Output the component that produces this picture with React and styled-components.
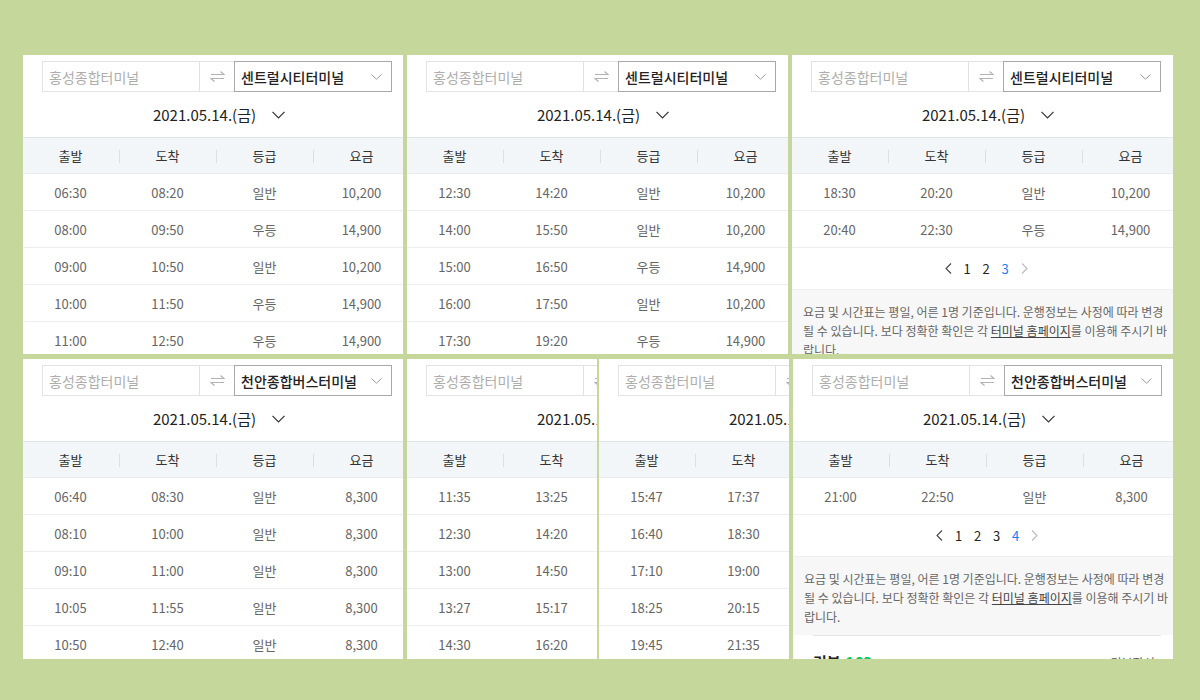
import React from 'react';
import styled, { createGlobalStyle } from 'styled-components';

const GlobalStyle = createGlobalStyle`
  html, body { margin: 0; padding: 0; }
  body {
    background: #c5d79a;
    font-family: "Noto Sans CJK KR", "Noto Sans", sans-serif;
  }
  * { box-sizing: border-box; }
`;

const Collage = styled.main`
  width: 1200px;
  height: 700px;
  overflow: hidden;
  display: flex;
  flex-direction: column;
  gap: 5px;
  padding: 55px 0 0 23px;
`;

const Row = styled.div`
  display: flex;
  gap: 4px;
`;

const Pair = styled.div`
  display: flex;
  gap: 2px;
`;

const Panel = styled.section`
  flex: none;
  width: ${(p) => p.$w}px;
  height: ${(p) => p.$h}px;
  background: #fff;
  overflow: hidden;
`;

const Page = styled.div`
  width: 388px;
  display: flex;
  flex-direction: column;
`;

const SearchBar = styled.div`
  display: flex;
  height: 31px;
  margin: 6px 19px 0;
`;

const FromField = styled.div`
  width: 157px;
  border: 1px solid #e3e3e3;
  border-right: none;
  display: flex;
  align-items: center;
  padding-left: 6px;
  font-size: 14px;
  color: #adadad;
  white-space: nowrap;
  overflow: hidden;
`;

const SwapBox = styled.div`
  width: 35px;
  border: 1px solid #e3e3e3;
  border-right: none;
  display: flex;
  align-items: center;
  justify-content: center;
`;

const ToSelect = styled.div`
  width: 158px;
  border: 1px solid #a9a9a9;
  display: flex;
  align-items: center;
  justify-content: space-between;
  padding: 0 9px 0 6px;
  font-size: 14px;
  font-weight: 500;
  color: #222;
  white-space: nowrap;
`;

const DateRow = styled.div`
  height: 45px;
  display: flex;
  align-items: center;
  justify-content: center;
  gap: 16px;
  padding-left: 4px;
  font-size: 15px;
  color: #222;
  white-space: nowrap;
`;

const Grid = styled.div`
  display: grid;
  grid-template-columns: repeat(4, 97px);
  margin-left: -1px;
  align-items: center;
`;

const HeadRow = styled(Grid)`
  height: 37px;
  background: #f3f6f9;
  border-top: 1px solid #e2e6ea;
  border-bottom: 1px solid #e9edf0;
`;

const HeadCell = styled.div`
  position: relative;
  text-align: center;
  font-size: 13px;
  color: #333;
  & + &::before {
    content: '';
    position: absolute;
    left: 0;
    top: 50%;
    width: 1px;
    height: 13px;
    margin-top: -6px;
    background: #dcdfe3;
  }
`;

const BodyRow = styled(Grid)`
  height: 37px;
  border-bottom: 1px solid #eeeeee;
`;

const Cell = styled.div`
  text-align: center;
  font-size: 13px;
  color: #666;
`;

const Pager = styled.div`
  height: 41px;
  display: flex;
  align-items: center;
  justify-content: center;
  font-size: 13px;
`;

const PageItem = styled.span`
  width: 19px;
  display: flex;
  justify-content: center;
  align-items: center;
  color: ${(p) => (p.$active ? '#1a7ef5' : '#222')};
`;

const Notice = styled.p`
  margin: 0;
  background: #f7f7f7;
  border-top: 1px solid #efefef;
  padding: 12px 10px 9px 11px;
  font-size: 12px;
  line-height: 19px;
  color: #666;
`;

const NoticeLink = styled.span`
  color: #444;
  text-decoration: underline;
`;

const Review = styled.div`
  margin: 0 20px;
  border-top: 1px solid #e6e6e6;
  padding-top: 15px;
  display: flex;
  justify-content: space-between;
  align-items: baseline;
`;

const ReviewTitle = styled.strong`
  font-size: 15px;
  color: #222;
`;

const ReviewCount = styled.span`
  margin-left: 5px;
  color: #03c75a;
`;

const ReviewLink = styled.span`
  font-size: 12px;
  color: #555;
`;

const SwapIcon = () => (
  <svg width="15" height="11" viewBox="0 0 15 11" fill="none" stroke="#b3b3b3" strokeWidth="1.2">
    <path d="M1 3.5H14L10.5 0.5" />
    <path d="M14 7.5H1L4.5 10.5" />
  </svg>
);

const SelectChevron = () => (
  <svg width="11" height="6" viewBox="0 0 11 6" fill="none" stroke="#9a9a9a" strokeWidth="1">
    <path d="M0.5 0.5L5.5 5.2L10.5 0.5" />
  </svg>
);

const DateChevron = () => (
  <svg width="13" height="8" viewBox="0 0 13 8" fill="none" stroke="#333" strokeWidth="1.2">
    <path d="M0.5 0.8L6.5 6.8L12.5 0.8" />
  </svg>
);

const ArrowLeft = () => (
  <svg width="7" height="11" viewBox="0 0 7 11" fill="none" stroke="#444" strokeWidth="1.1">
    <path d="M6 0.5L1 5.5L6 10.5" />
  </svg>
);

const ArrowRight = () => (
  <svg width="7" height="11" viewBox="0 0 7 11" fill="none" stroke="#bbb" strokeWidth="1.1">
    <path d="M1 0.5L6 5.5L1 10.5" />
  </svg>
);

const heads = ['출발', '도착', '등급', '요금'];

const Schedule = ({ to, rows, pages, active, notice, review }) => (
  <Page>
    <SearchBar>
      <FromField>홍성종합터미널</FromField>
      <SwapBox>
        <SwapIcon />
      </SwapBox>
      <ToSelect>
        {to}
        <SelectChevron />
      </ToSelect>
    </SearchBar>
    <DateRow>
      2021.05.14.(금)
      <DateChevron />
    </DateRow>
    <HeadRow>
      {heads.map((h) => (
        <HeadCell key={h}>{h}</HeadCell>
      ))}
    </HeadRow>
    {rows.map((r, i) => (
      <BodyRow key={i}>
        {r.map((c, j) => (
          <Cell key={j}>{c}</Cell>
        ))}
      </BodyRow>
    ))}
    {pages && (
      <Pager>
        <PageItem>
          <ArrowLeft />
        </PageItem>
        {Array.from({ length: pages }, (_, i) => (
          <PageItem key={i} $active={i + 1 === active}>
            {i + 1}
          </PageItem>
        ))}
        <PageItem>
          <ArrowRight />
        </PageItem>
      </Pager>
    )}
    {notice && (
      <Notice>
        요금 및 시간표는 평일, 어른 1명 기준입니다. 운행정보는 사정에 따라 변경될 수 있습니다. 보다 정확한 확인은 각{' '}
        <NoticeLink>터미널 홈페이지</NoticeLink>를 이용해 주시기 바랍니다.
      </Notice>
    )}
    {review && (
      <Review>
        <ReviewTitle>
          리뷰<ReviewCount>163</ReviewCount>
        </ReviewTitle>
        <ReviewLink>리뷰작성 ›</ReviewLink>
      </Review>
    )}
  </Page>
);

const SEOUL = '센트럴시티터미널';
const CHEONAN = '천안종합버스터미널';

const seoul1 = [
  ['06:30', '08:20', '일반', '10,200'],
  ['08:00', '09:50', '우등', '14,900'],
  ['09:00', '10:50', '일반', '10,200'],
  ['10:00', '11:50', '우등', '14,900'],
  ['11:00', '12:50', '우등', '14,900'],
];
const seoul2 = [
  ['12:30', '14:20', '일반', '10,200'],
  ['14:00', '15:50', '일반', '10,200'],
  ['15:00', '16:50', '우등', '14,900'],
  ['16:00', '17:50', '일반', '10,200'],
  ['17:30', '19:20', '우등', '14,900'],
];
const seoul3 = [
  ['18:30', '20:20', '일반', '10,200'],
  ['20:40', '22:30', '우등', '14,900'],
];
const cheonan1 = [
  ['06:40', '08:30', '일반', '8,300'],
  ['08:10', '10:00', '일반', '8,300'],
  ['09:10', '11:00', '일반', '8,300'],
  ['10:05', '11:55', '일반', '8,300'],
  ['10:50', '12:40', '일반', '8,300'],
];
const cheonan2 = [
  ['11:35', '13:25', '일반', '8,300'],
  ['12:30', '14:20', '일반', '8,300'],
  ['13:00', '14:50', '일반', '8,300'],
  ['13:27', '15:17', '일반', '8,300'],
  ['14:30', '16:20', '일반', '8,300'],
];
const cheonan3 = [
  ['15:47', '17:37', '일반', '8,300'],
  ['16:40', '18:30', '일반', '8,300'],
  ['17:10', '19:00', '일반', '8,300'],
  ['18:25', '20:15', '일반', '8,300'],
  ['19:45', '21:35', '일반', '8,300'],
];
const cheonan4 = [['21:00', '22:50', '일반', '8,300']];

export default function App() {
  return (
    <>
      <GlobalStyle />
      <Collage>
        <Row>
          <Panel $w={380} $h={299}>
            <Schedule to={SEOUL} rows={seoul1} />
          </Panel>
          <Panel $w={381} $h={299}>
            <Schedule to={SEOUL} rows={seoul2} />
          </Panel>
          <Panel $w={381} $h={299}>
            <Schedule to={SEOUL} rows={seoul3} pages={3} active={3} notice />
          </Panel>
        </Row>
        <Row>
          <Panel $w={380} $h={300}>
            <Schedule to={CHEONAN} rows={cheonan1} />
          </Panel>
          <Pair>
            <Panel $w={190} $h={300}>
              <Schedule to={CHEONAN} rows={cheonan2} />
            </Panel>
            <Panel $w={190} $h={300}>
              <Schedule to={CHEONAN} rows={cheonan3} />
            </Panel>
          </Pair>
          <Panel $w={380} $h={300}>
            <Schedule to={CHEONAN} rows={cheonan4} pages={4} active={4} notice review />
          </Panel>
        </Row>
      </Collage>
    </>
  );
}
